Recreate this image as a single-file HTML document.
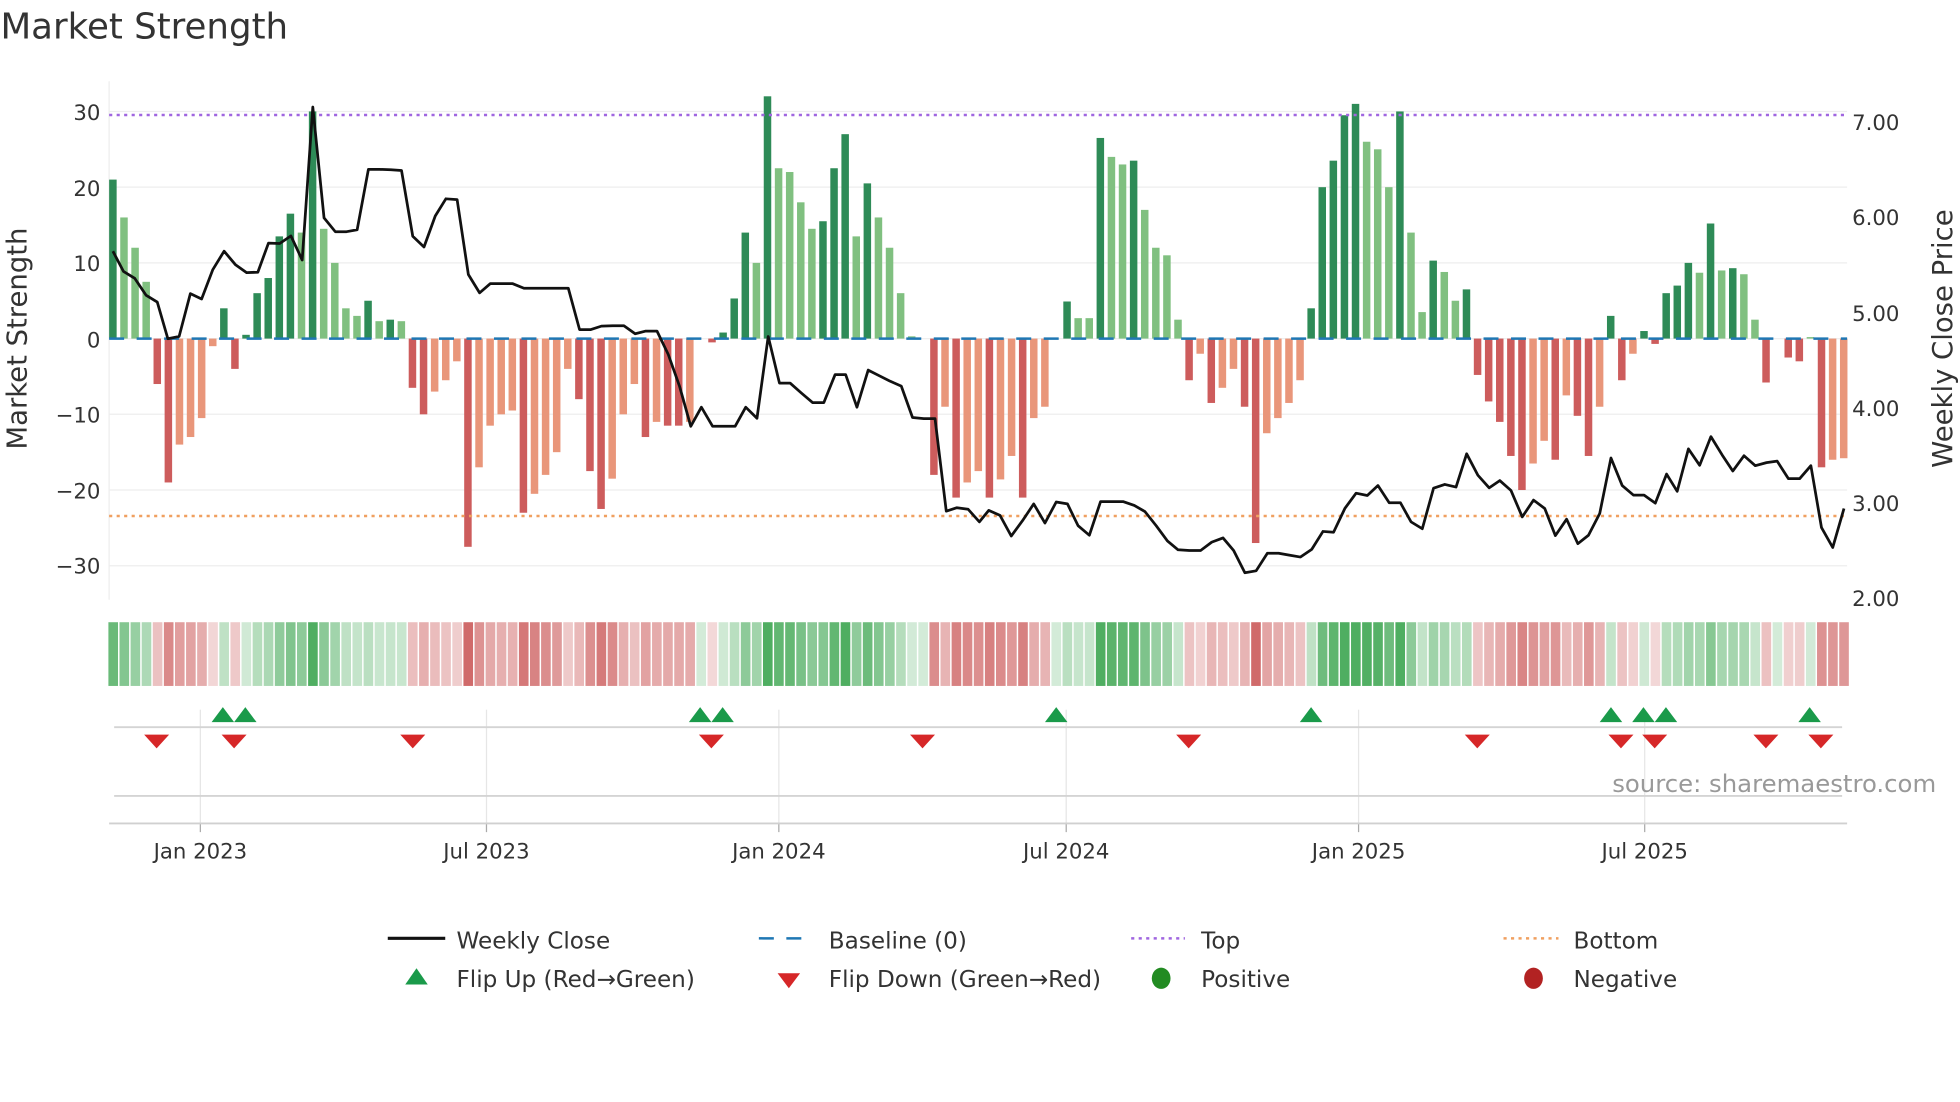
<!DOCTYPE html>
<html><head><meta charset="utf-8"><style>
html,body{margin:0;padding:0;background:#fff;overflow:hidden}
svg{display:block}
text{font-family:"DejaVu Sans","Liberation Sans",sans-serif;fill:#333}
</style></head><body>
<svg id="s" width="1960" height="1102" viewBox="0 0 1568 882" xmlns="http://www.w3.org/2000/svg">
<text x="0" y="31" font-size="28.5">Market Strength</text>
<g id="grid"></g>
<g id="bars"></g>
<line x1="87" y1="92" x2="1478" y2="92" stroke="#a066e0" stroke-width="2" stroke-dasharray="2.5,3.5"/>
<line x1="87" y1="413" x2="1478" y2="413" stroke="#f0a060" stroke-width="2" stroke-dasharray="2.5,3.5"/>
<line x1="87" y1="271" x2="1478" y2="271" stroke="#1f77b4" stroke-width="2" stroke-dasharray="12,10"/>
<g id="line"></g>
<g id="strip"></g>
<g id="marks"></g>
<g font-size="17">
<text x="80" y="96" text-anchor="end">30</text>
<text x="80" y="157" text-anchor="end">20</text>
<text x="80" y="217" text-anchor="end">10</text>
<text x="80" y="278" text-anchor="end">0</text>
<text x="80" y="338" text-anchor="end">−10</text>
<text x="80" y="399" text-anchor="end">−20</text>
<text x="80" y="459" text-anchor="end">−30</text>
<text x="1482" y="104">7.00</text>
<text x="1482" y="180">6.00</text>
<text x="1482" y="257">5.00</text>
<text x="1482" y="333">4.00</text>
<text x="1482" y="409">3.00</text>
<text x="1482" y="485">2.00</text>
<text x="160" y="687" text-anchor="middle">Jan 2023</text>
<text x="389" y="687" text-anchor="middle">Jul 2023</text>
<text x="623" y="687" text-anchor="middle">Jan 2024</text>
<text x="853" y="687" text-anchor="middle">Jul 2024</text>
<text x="1087" y="687" text-anchor="middle">Jan 2025</text>
<text x="1316" y="687" text-anchor="middle">Jul 2025</text>
<text x="1290" y="634" font-size="19.5" style="fill:#999">source: sharemaestro.com</text>
</g>
<text font-size="22" transform="translate(21,271) rotate(-90)" text-anchor="middle">Market Strength</text>
<text font-size="22" transform="translate(1562,271) rotate(-90)" text-anchor="middle">Weekly Close Price</text>
<g font-size="18.5">
<line x1="310" y1="751" x2="356" y2="751" stroke="#111" stroke-width="2.5"/>
<text x="365" y="759">Weekly Close</text>
<line x1="607" y1="751" x2="650" y2="751" stroke="#1f77b4" stroke-width="2" stroke-dasharray="12,10"/>
<text x="663" y="759">Baseline (0)</text>
<line x1="905" y1="751" x2="948" y2="751" stroke="#a066e0" stroke-width="2" stroke-dasharray="2.5,3.5"/>
<text x="961" y="759">Top</text>
<line x1="1203" y1="751" x2="1247" y2="751" stroke="#f0a060" stroke-width="2" stroke-dasharray="2.5,3.5"/>
<text x="1259" y="759">Bottom</text>
<polygon points="333,775 324,788 342,788" fill="#1a9a4a"/>
<text x="365" y="790">Flip Up (Red→Green)</text>
<polygon points="622,779 640,779 631,791" fill="#d62728"/>
<text x="663" y="790">Flip Down (Green→Red)</text>
<ellipse cx="929" cy="783" rx="7.5" ry="8.5" fill="#228b22"/>
<text x="961" y="790">Positive</text>
<ellipse cx="1227" cy="783" rx="7.5" ry="8.5" fill="#b22222"/>
<text x="1259" y="790">Negative</text>
</g>
</svg>
<script>
var NS="http://www.w3.org/2000/svg";
function el(p,t,a){var e=document.createElementNS(NS,t);for(var k in a)e.setAttribute(k,a[k]);document.getElementById(p).appendChild(e);return e;}
[30,20,10,0,-10,-20,-30].forEach(function(v){var y=271-v*6.06;el("grid","line",{x1:87,x2:1478,y1:y,y2:y,stroke:"#eee","stroke-width":1});});
el("grid","line",{x1:87,x2:87,y1:65,y2:480,stroke:"#eee","stroke-width":1});
var ticks=[160,389,623,853,1087,1316];
ticks.forEach(function(x){el("grid","line",{x1:x,x2:x,y1:568,y2:659,stroke:"#e6e6e6","stroke-width":1});el("grid","line",{x1:x,x2:x,y1:659,y2:666,stroke:"#aaa","stroke-width":1});});
el("grid","line",{x1:91,x2:1474,y1:582,y2:582,stroke:"#d4d4d4","stroke-width":1.5});
el("grid","line",{x1:91,x2:1474,y1:637,y2:637,stroke:"#d4d4d4","stroke-width":1.5});
el("grid","line",{x1:87,x2:1478,y1:659,y2:659,stroke:"#d0d0d0","stroke-width":1.5});
var B="21D 16L 12L 7.5L -6D -19D -14L -13L -10.5L -1L 4D -4D 0.5D 6D 8D 13.5D 16.5D 14L 30D 14.5L 10L 4L 3L 5D 2.3L 2.5D 2.3L -6.5D -10D -7L -5.5L -3L -27.5D -17L -11.5L -10L -9.5L -23D -20.5L -18L -15L -4L -8D -17.5D -22.5D -18.5L -10L -6L -13D -11L -11.5D -11.5D -11L 0L -0.5D 0.8D 5.3D 14D 10L 32D 22.5L 22L 18L 14.5L 15.5D 22.5D 27D 13.5L 20.5D 16L 12L 6L 0.3L 0L -18D -9L -21D -19L -17.5L -21D -18.6L -15.5L -21D -10.5L -9L 0L 4.9D 2.7L 2.7L 26.5D 24L 23L 23.5D 17L 12L 11L 2.5L -5.5D -2L -8.5D -6.5L -4L -9D -27D -12.5L -10.5L -8.5L -5.5L 4D 20D 23.5D 29.5D 31D 26L 25L 20L 30D 14L 3.5L 10.3D 8.8L 5L 6.5D -4.8D -8.3D -11D -15.5D -20D -16.5L -13.5L -16D -7.5L -10.2D -15.5D -9L 3D -5.5D -2L 1D -0.7D 6D 7D 10D 8.7L 15.2D 9L 9.3D 8.5L 2.5L -5.8D 0L -2.5D -3D 0.2L -17D -16L -15.8L".split(" ");
var st=8.88;
B.forEach(function(s,i){var v=parseFloat(s),d=s.slice(-1)=="D";var x=90+st*i;
 if(Math.abs(v)>0.05){var h=Math.abs(v)*6.06;var c=v>0?(d?"#2e8b57":"#80c080"):(d?"#cd5c5c":"#e9967a");
 el("bars","rect",{x:x-3,width:6,y:v>0?271-h:271,height:h,fill:c});}
 var a=Math.min(1,0.25+Math.abs(v)/35);var sc=v>=0?"rgba(60,165,80,"+(a*0.9)+")":"rgba(200,80,80,"+(a*0.85)+")";
 el("strip","rect",{x:x-3.6,width:7.7,y:498,height:51,fill:sc});
});
var L1=[[180,657],[197,710],[215,728],[233,772],[251,790],[268,886],[286,880],[304,768],[322,782],[340,705],[358,657],[376,692],[394,713],[412,712],[429,636],[447,637],[465,617],[483,680],[500,280],[518,570],[536,606],[554,606],[571,601],[589,443],[607,443],[625,444],[642,446],[660,618],[678,646],[696,565],[713,520],[731,522],[749,718],[767,766],[784,742],[802,742],[820,742],[838,754],[856,754],[873,754],[891,754],[909,754],[927,862],[945,862],[962,853],[980,852],[998,852],[1016,873],[1033,866],[1051,866],[1069,927],[1087,1010],[1105,1115],[1122,1065],[1140,1115],[1158,1115],[1176,1115],[1193,1065],[1211,1094],[1229,880],[1247,1002],[1264,1002],[1282,1028],[1300,1053],[1318,1053],[1336,980],[1353,980],[1371,1065],[1389,968],[1407,983],[1424,997],[1442,1010],[1460,1092],[1478,1095],[1496,1095],[1514,1337],[1531,1328],[1549,1332],[1567,1365]];
var L2=[[14,1335],[32,1348],[50,1402],[68,1362],[86,1318],[104,1368],[122,1313],[140,1318],[157,1375],[175,1400],[193,1312],[211,1312],[229,1312],[247,1322],[264,1338],[282,1375],[300,1415],[317,1438],[335,1440],[353,1440],[371,1418],[389,1407],[406,1440],[424,1498],[442,1493],[460,1447],[478,1447],[495,1452],[513,1457],[531,1437],[549,1390],[566,1392],[584,1330],[602,1290],[620,1296],[637,1270],[655,1315],[673,1315],[690,1365],[708,1383],[726,1277],[744,1267],[762,1274],[779,1187],[797,1243],[815,1276],[832,1257],[850,1283],[868,1352],[886,1308],[904,1330],[921,1401],[939,1358],[957,1422],[974,1400],[992,1343],[1010,1198],[1028,1270],[1046,1295],[1063,1295],[1081,1316],[1099,1240],[1116,1285],[1134,1174],[1152,1217],[1170,1142],[1188,1190],[1205,1232],[1223,1192],[1241,1218],[1259,1210],[1276,1206],[1294,1252],[1312,1252],[1330,1218],[1347,1380],[1365,1432],[1383,1330]];
var pts=L1.map(function(p){return (p[0]/2)+","+(p[1]*0.306);}).concat(L2.map(function(p){return (784+p[0]/2)+","+(p[1]*0.306);}));
el("line","polyline",{points:pts.join(" "),fill:"none",stroke:"#111","stroke-width":2.2,"stroke-linejoin":"round"});
[178,196,560,578,845,1049,1289,1315,1333,1448].forEach(function(x){el("marks","polygon",{points:(x)+",566 "+(x-9)+",578 "+(x+9)+",578",fill:"#1a9a4a"});});
[125,187,330,569,738,951,1182,1297,1324,1413,1457].forEach(function(x){el("marks","polygon",{points:(x-10)+",588 "+(x+10)+",588 "+x+",599",fill:"#d62728"});});
</script>
</body></html>
